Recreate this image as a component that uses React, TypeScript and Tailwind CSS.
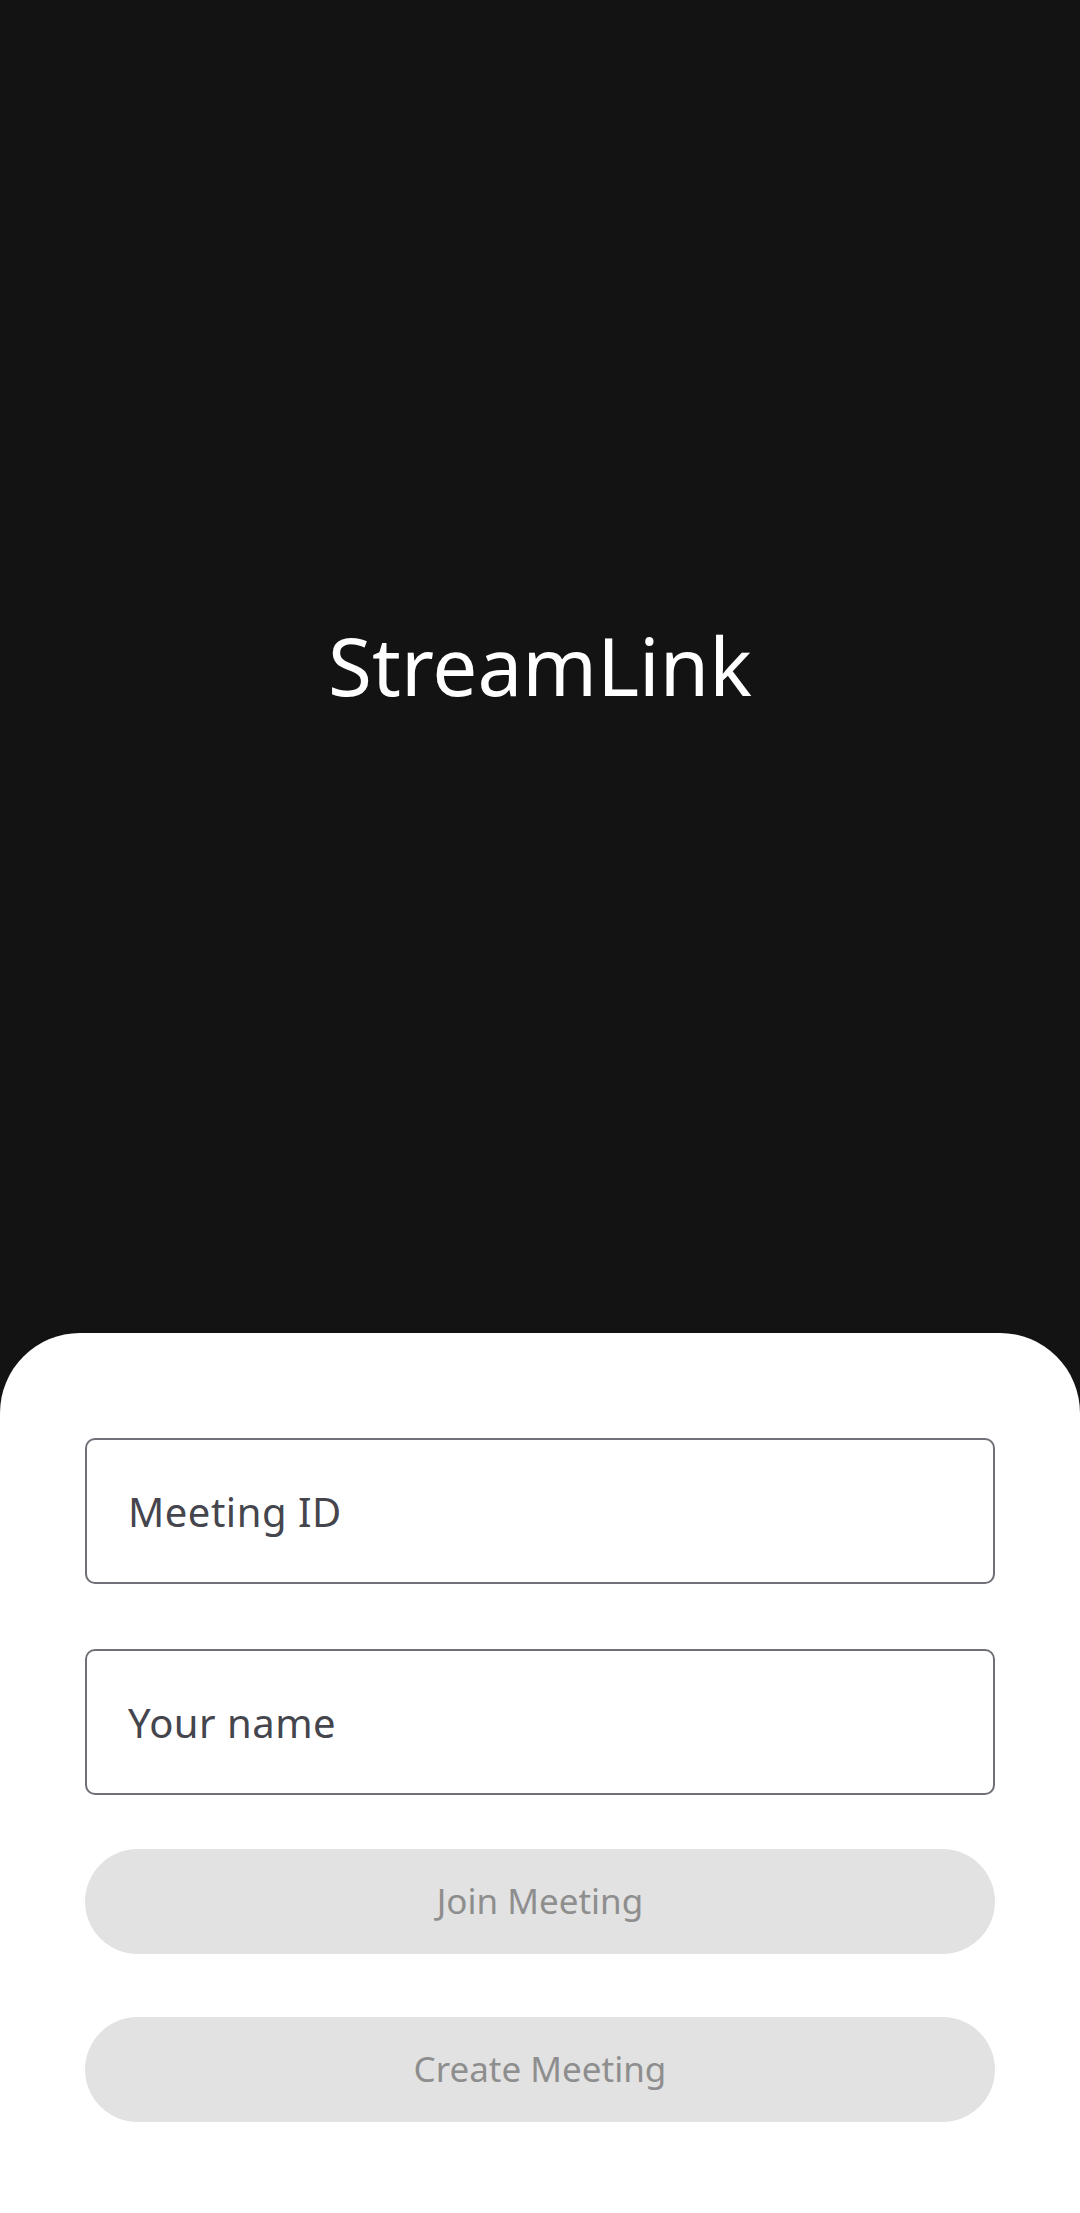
export default function App() {
  return (
    <div
      className="w-[1080px] h-[2213px] bg-[#131313] flex flex-col"
      style={{ fontFamily: '"Noto Sans", "Open Sans", sans-serif' }}
    >
      <header className="h-[1333px] flex items-center justify-center pb-[4px]">
        <h1 className="text-white text-[80px] leading-none font-normal">StreamLink</h1>
      </header>
      <main className="flex-1 bg-white rounded-t-[80px] px-[85px] pt-[105px] flex flex-col">
        <input
          className="h-[146px] w-full rounded-[10px] border-2 border-[#707078] px-[41px] text-[40px] tracking-[0.5px] text-[#45454d] placeholder:text-[#45454d] outline-none"
          placeholder="Meeting ID"
        />
        <input
          className="mt-[65px] h-[146px] w-full rounded-[10px] border-2 border-[#707078] px-[41px] text-[40px] tracking-[0.5px] text-[#45454d] placeholder:text-[#45454d] outline-none"
          placeholder="Your name"
        />
        <button className="mt-[54px] h-[105px] w-full rounded-full bg-[#e2e2e2] text-[#8e8e8e] text-[35px]">
          Join Meeting
        </button>
        <button className="mt-[63px] h-[105px] w-full rounded-full bg-[#e2e2e2] text-[#8e8e8e] text-[35px]">
          Create Meeting
        </button>
      </main>
    </div>
  );
}
